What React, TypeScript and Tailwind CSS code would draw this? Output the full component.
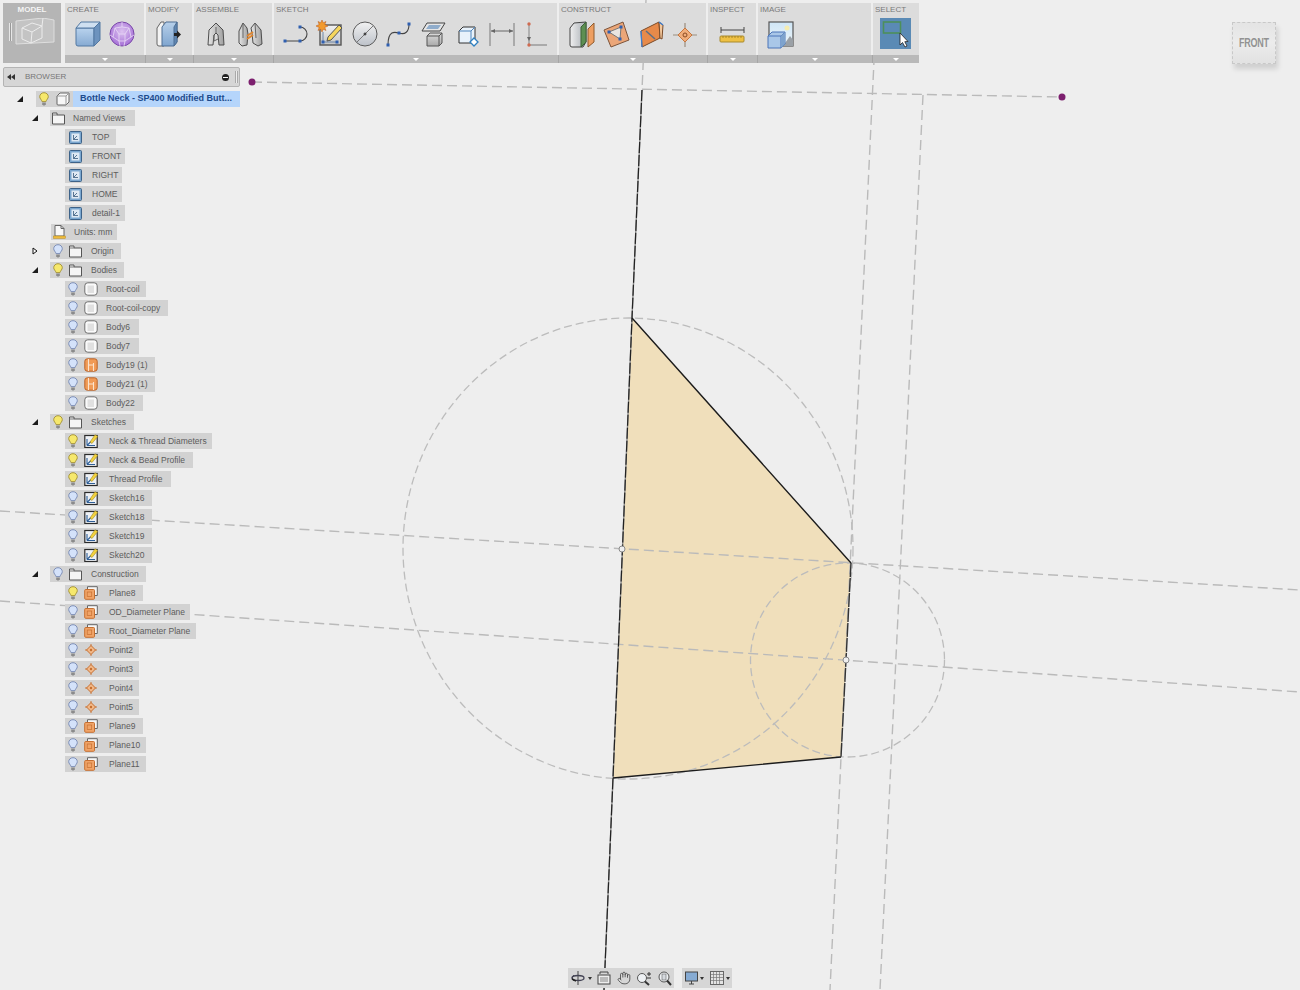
import React from "react";
import { Hand } from "lucide-react";

const S = ({ children, w = 34, h = 34 }: { children: React.ReactNode; w?: number; h?: number }) => (
  <svg width={w} height={h} viewBox={`0 0 ${w} ${h}`} className="block shrink-0">{children}</svg>
);
const Dot = ({ x, y, c = "#2f5fb0" }: { x: number; y: number; c?: string }) => <rect x={x - 1.5} y={y - 1.5} width={3} height={3} fill={c} />;

const Grad = ({ id, a, b, h }: { id: string; a: string; b: string; h?: boolean }) => (
  <defs><linearGradient id={id} x1="0" y1="0" x2={h ? "1" : "0"} y2={h ? "0" : "1"}><stop offset="0" stopColor={a} /><stop offset="1" stopColor={b} /></linearGradient></defs>
);

const IBox = () => (
  <S><Grad id="bx" a="#b9d3ee" b="#86aad2" />
    <path d="M5 10 L23 10 L23 28 L7 28 Q5 28 5 26 Z" fill="url(#bx)" stroke="#5278a2" />
    <path d="M5 10 L10 4 L29 4 L23 10 Z" fill="#cfe0f1" stroke="#5278a2" />
    <path d="M23 10 L29 4 L29 22 L23 28 Z" fill="#6d93be" stroke="#5278a2" />
  </S>
);
const ISphere = () => (
  <S><defs><radialGradient id="sp" cx="0.5" cy="0.4" r="0.6"><stop offset="0" stopColor="#dcc2f0" /><stop offset="1" stopColor="#a56fd6" /></radialGradient></defs>
    <circle cx="17" cy="16" r="12" fill="url(#sp)" stroke="#7a4aa8" />
    <path d="M17 4 L17 9 M10 10 L17 9 L24 10 M10 10 L8 19 L14 23 L20 23 L26 19 L24 10 M14 23 L15 28 M20 23 L19 28 M8 19 L5 17 M26 19 L29 17 M10 10 L14 16 L20 16 L24 10 M14 16 L14 23 M20 16 L20 23" fill="none" stroke="#eadcf6" strokeWidth="0.8" />
  </S>
);
const IPress = () => (
  <S><Grad id="pr" a="#b7d0ea" b="#7fa5cf" />
    <path d="M7 10 L11 4 L14 4 L14 28 L9 28 Q7 28 7 26 Z" fill="#f3f3f3" stroke="#666" />
    <path d="M12 9 L16 4 L27 4 L27 24 L24 28 L12 28 Z" fill="url(#pr)" stroke="#4f6f94" />
    <path d="M24 9 L27 4 L27 24 L24 28 Z" fill="#5f86b2" stroke="#4f6f94" />
    <path d="M24 15 L27 15 L27 12.5 L31 16.5 L27 20.5 L27 18 L24 18 Z" fill="#222" />
  </S>
);
const IJoint = () => (
  <S><Grad id="jt" a="#e4e4e4" b="#a0a0a0" h />
    <path d="M17 5 L24 12 L25 27 L20 27 L19 17 L17 15 L15 17 L14 27 L9 27 L10 12 Z" fill="url(#jt)" stroke="#4d4d4d" />
    <path d="M17 9 L17 15 M15 17 L15 23 L19 21" fill="none" stroke="#666" />
  </S>
);
const IJoint2 = () => (
  <S><Grad id="jt2" a="#e6e6e6" b="#a2a2a2" h />
    <path d="M10 5 L14 10 L15 16 L14 27 L9 28 L6 25 L6 13 Z" fill="url(#jt2)" stroke="#4d4d4d" />
    <path d="M22 5 L28 12 L29 26 L25 28 L20 25 L19 15 L18 10 Z" fill="url(#jt2)" stroke="#4d4d4d" />
    <path d="M10 5 L10 20 M22 5 L23 20" stroke="#666" fill="none" />
    <path d="M14 18 L20 14 M14 21 L20 17" stroke="#e0862f" strokeWidth="2" fill="none" />
  </S>
);
const ILine = () => (
  <S><path d="M6 23 L21 23 A7 7 0 0 0 21 9" fill="none" stroke="#444" strokeWidth="1.1" /><Dot x={6} y={23} /><Dot x={21} y={23} /><Dot x={21} y={9} /></S>
);
const ISketch = () => (
  <S><Grad id="sk" a="#f2f2f2" b="#c4c4c4" />
    <rect x="7" y="7" width="21" height="20" fill="url(#sk)" stroke="#555" strokeWidth="1.4" />
    <path d="M10 24 L24 24 M10 24 L10 14" stroke="#6c86a8" fill="none" />
    <Dot x={10} y={24} /><Dot x={24} y={24} />
    <path d="M15 19 L26 7 L29 10 L18 22 L14 23 Z" fill="#f6d65c" stroke="#555" />
    <path d="M9 2 L10.3 4.8 L13 3.5 L11.8 6.5 L15 8 L11.8 9.5 L13 12.5 L10.3 11.2 L9 14 L7.7 11.2 L5 12.5 L6.2 9.5 L3 8 L6.2 6.5 L5 3.5 L7.7 4.8 Z" fill="#f29a2e" stroke="#b4541a" strokeWidth="0.5" />
  </S>
);
const ICircle = () => (
  <S><Grad id="ci" a="#f2f2f2" b="#bcc1c9" />
    <circle cx="17" cy="16" r="12" fill="url(#ci)" stroke="#5a5a5a" />
    <path d="M9 24 L25 8" stroke="#777" /><path d="M15.5 16 L18.5 16 M17 14.5 L17 17.5" stroke="#222" />
  </S>
);
const ISpline = () => (
  <S><path d="M6 27 C6 12 13 14 17 15 C23 17 27 14 27 6" fill="none" stroke="#444" strokeWidth="1.1" /><Dot x={6} y={27} /><Dot x={17} y={15} /><Dot x={27} y={6} /></S>
);
const IPlaneBox = () => (
  <S><Grad id="pb" a="#dcdcdc" b="#a9a9a9" />
    <path d="M11 5 L29 5 L24 13 L6 13 Z" fill="#e6e6e6" stroke="#444" />
    <path d="M13 7 L25 7 L22 11 L10 11 Z" fill="#8faccb" />
    <path d="M11 18 L14 15 L26 15 L26 25 L23 28 L11 28 Z" fill="url(#pb)" stroke="#555" />
    <path d="M11 18 L23 18 L23 28 M23 18 L26 15" stroke="#555" fill="none" />
  </S>
);
const ICubeLine = () => (
  <S><path d="M9 13 L13 9 L25 9 L25 21 L21 25 L9 25 Z" fill="#e8f2fb" stroke="#333" />
    <path d="M9 13 L21 13 L21 25 M21 13 L25 9" fill="none" stroke="#4f86bd" />
    <path d="M24 20 L28 24 L24 28 L20 24 Z" fill="#fff" stroke="#2e7fc0" strokeWidth="1.3" />
  </S>
);
const IDim = () => (
  <S><path d="M5 5 L5 28 M29 5 L29 28" stroke="#999" strokeWidth="1.5" /><path d="M6 13 L28 13" stroke="#666" /><path d="M6 13 L10 11 L10 15 Z M28 13 L24 11 L24 15 Z" fill="#666" /></S>
);
const IConstr = () => (
  <S><path d="M10 6 L10 27 L28 27" fill="none" stroke="#999" strokeWidth="1.3" /><path d="M10 23 L8 19 L12 19 Z" fill="#666" /><circle cx="10" cy="6" r="1.7" fill="#cf6a50" /><circle cx="10" cy="27" r="1.7" fill="#cf6a50" /></S>
);
const IOffset = () => (
  <S><Grad id="of" a="#f0f0f0" b="#a6acb2" h />
    <path d="M5 10 L9 5 L21 4 L21 24 L18 29 L7 29 Q5 29 5 27 Z" fill="url(#of)" stroke="#444" />
    <path d="M16 9 L21 4 L21 24 L16 29 Z" fill="#5d8f52" stroke="#3c6337" />
    <path d="M23 11 L29 5 L29 24 L23 29 Z" fill="#ee9f62" stroke="#8f5a2d" />
  </S>
);
const ITilt = () => (
  <S><path d="M5 12 L24 4 L30 22 L12 29 Z" fill="#eba678" stroke="#7d543a" />
    <path d="M10 14 L22 9 L21 21 Z" fill="#e9e5e1" stroke="#777" />
    <Dot x={10} y={14} c="#3160b0" /><Dot x={22} y={9} c="#3160b0" /><Dot x={21} y={21} c="#3160b0" />
  </S>
);
const IMid = () => (
  <S><path d="M7 13 L25 4 L26 20 L8 29 Z" fill="#e78a4a" stroke="#7a4a28" />
    <path d="M25 4 L29 7 L28 21 L26 20 Z" fill="#f2c79c" stroke="#7a4a28" />
    <path d="M7 13 L8 29 M25 4 L29 7" stroke="#3f7fd0" strokeWidth="1.3" />
    <path d="M12 13 L21 21" stroke="#5b6f86" strokeWidth="1.5" />
  </S>
);
const IPointC = () => (
  <S><path d="M17 5 L17 29 M5 17 L29 17" stroke="#9a8d7e" strokeWidth="1.2" /><path d="M17 10 L24 17 L17 24 L10 17 Z" fill="#f0ad7a" stroke="#c7763e" /><circle cx="17" cy="17" r="2" fill="none" stroke="#8a4a22" /></S>
);
const IRuler = () => (
  <S><path d="M6 12 L29 12 M6 9 L6 15 M29 9 L29 15" stroke="#444" /><rect x="5" y="18" width="24" height="6" rx="1" fill="#eec043" stroke="#a98a2c" /><path d="M8 18v2M11 18v2M14 18v2M17 18v2M20 18v2M23 18v2M26 18v2" stroke="#8f7420" strokeWidth="0.7" /></S>
);
const IImage = () => (
  <S><Grad id="im" a="#cfe6f6" b="#eef6fb" />
    <rect x="6" y="4" width="24" height="24" fill="url(#im)" stroke="#555" strokeWidth="1.2" />
    <circle cx="24" cy="10" r="2.5" fill="#f4ecb0" />
    <path d="M20 28 L27 18 L30 22 L30 28 Z" fill="#9aa0a6" />
    <path d="M5 18 L9 14 L22 14 L22 26 L18 30 L5 30 Z" fill="#a9c7e8" stroke="#4a74b8" />
    <path d="M5 18 L18 18 L18 30 M18 18 L22 14" fill="none" stroke="#4a74b8" />
    <path d="M18 18 L22 14 L22 26 L18 30 Z" fill="#7ea3cd" />
  </S>
);
const ISelect = () => (
  <S w={31} h={31}>
    <rect width="31" height="31" fill="#5a8ab5" />
    <rect x="3.5" y="4" width="17" height="11" fill="none" stroke="#4d8f5a" strokeWidth="1.6" />
    <path d="M20 15 L20 27 L22.5 24.5 L25 29 L27 28 L24.8 23.7 L28 23.5 Z" fill="#fff" stroke="#222" strokeWidth="0.8" />
  </S>
);

const Bulb = ({ on }: { on?: boolean }) => (
  <svg width="10" height="14" viewBox="0 0 10 14" className="block">
    <path d="M5 0.7 C2.4 0.7 0.7 2.6 0.7 4.7 C0.7 6.7 2.6 7.6 3 9.6 L7 9.6 C7.4 7.6 9.3 6.7 9.3 4.7 C9.3 2.6 7.6 0.7 5 0.7 Z" fill={on ? "#f6e86c" : "#d4e2fa"} stroke={on ? "#a8973f" : "#7f90b8"} />
    <path d="M3.2 10.5 L6.8 10.5 L6.8 12.2 L5.6 13.4 L4.4 13.4 L3.2 12.2 Z" fill="#8b8b8b" />
  </svg>
);
const Folder = () => (
  <svg width="13" height="13" viewBox="0 0 13 13" className="block"><path d="M0.5 1 L5 1 L5 3 L12.5 3 L12.5 12 L0.5 12 Z" fill="#f5f5f5" stroke="#555" /><path d="M0.5 3 L5 3" stroke="#777" /></svg>
);
const Cube = () => (
  <svg width="14" height="14" viewBox="0 0 14 14" className="block"><path d="M1 4 L4 1 L13 1 L13 10 L10 13 L2 13 Q1 13 1 12 Z" fill="#f7f7f7" stroke="#666" /><path d="M10 4 L13 1 M10 4 L10 13 M1 4 L10 4" stroke="#999" fill="none" /></svg>
);
const BodyI = () => (
  <svg width="14" height="14" viewBox="0 0 14 14" className="block"><rect x="0.8" y="0.8" width="12.4" height="12.4" rx="3" fill="#fafafa" stroke="#6f6f6f" /><rect x="3.5" y="3.5" width="6.5" height="7.5" fill="#e0e0e0" /></svg>
);
const BodyO = () => (
  <svg width="14" height="14" viewBox="0 0 14 14" className="block"><rect x="0.8" y="0.8" width="12.4" height="12.4" rx="2.5" fill="#f09a55" stroke="#b9632a" /><path d="M4.5 1 L4.5 13 M9.5 5 L9.5 13 M4.5 7 L9.5 7" stroke="#fbe3cd" strokeWidth="1.1" fill="none" /></svg>
);
const SketchI = () => (
  <svg width="14" height="14" viewBox="0 0 14 14" className="block"><rect x="0.8" y="1.5" width="12.4" height="12" fill="#eef1f5" stroke="#2b2b2b" strokeWidth="1.2" /><path d="M3 11.5 L11 11.5 M3 11.5 L3 5 M3 11.5 L7 7.5" stroke="#2f5f98" strokeWidth="1.1" fill="none" /><path d="M6 8 L11 0.8 L13.8 2.4 L8 9.5 Z" fill="#f3d23f" stroke="#8e7a1c" strokeWidth="0.5" /></svg>
);
const PlaneI = () => (
  <svg width="14" height="14" viewBox="0 0 14 14" className="block"><path d="M3.5 3 L3.5 0.7 L13.3 0.7 L13.3 9.5 L10.5 9.5" fill="#f7f7f7" stroke="#666" /><rect x="0.7" y="3.5" width="9.8" height="9.8" rx="1" fill="#f0a468" stroke="#c66f30" /><rect x="3.2" y="6" width="4.5" height="4.5" fill="none" stroke="#c66f30" strokeWidth="0.7" /></svg>
);
const PointI = () => (
  <svg width="14" height="14" viewBox="0 0 14 14" className="block"><path d="M7 1 L7 13 M1 7 L13 7" stroke="#c97a3e" /><path d="M7 2.5 L11.5 7 L7 11.5 L2.5 7 Z" fill="#f2b98a" stroke="#c66f30" /><circle cx="7" cy="7" r="1.2" fill="#c66f30" /></svg>
);
const ViewI = () => (
  <svg width="13" height="13" viewBox="0 0 13 13" className="block"><rect x="0.5" y="0.5" width="12" height="12" rx="1" fill="#7ba7cf" stroke="#3d6288" /><rect x="2.5" y="2.5" width="8" height="8" fill="#dfe9f3" /><path d="M4.5 4 L4.5 8.5 L9 8.5 M4.5 8.5 L8 5" stroke="#36587a" fill="none" strokeWidth="0.8" /></svg>
);
const UnitsI = () => (
  <svg width="13" height="14" viewBox="0 0 13 14" className="block"><path d="M2 0.5 L8 0.5 L11 3.5 L11 11 L2 11 Z" fill="#f8f8f8" stroke="#666" /><path d="M8 0.5 L8 3.5 L11 3.5" fill="none" stroke="#666" /><rect x="0.5" y="11" width="12" height="2.4" fill="#eebb3c" stroke="#b88a1f" strokeWidth="0.5" /></svg>
);

const Tri = ({ open = true }: { open?: boolean }) =>
  open ? (
    <svg width="8" height="8" viewBox="0 0 8 8" className="block"><path d="M1 7 L7 7 L7 1 Z" fill="#1c1c1c" /></svg>
  ) : (
    <svg width="8" height="8" viewBox="0 0 8 8" className="block"><path d="M2 1 L6 4 L2 7 Z" fill="#fff" stroke="#111" /></svg>
  );

type Row = {
  t: string;
  lvl: "w-[50px]" | "w-[51px]" | "w-[65px]";
  w: string;
  kind: "named" | "view" | "units" | "folder" | "body" | "item";
  icon: React.ReactNode;
  on?: boolean;
  arrow?: "open" | "closed";
};

const rows: Row[] = [
  { t: "Named Views", lvl: "w-[50px]", w: "w-[85px]", kind: "named", icon: <Folder />, arrow: "open" },
  { t: "TOP", lvl: "w-[65px]", w: "w-[51px]", kind: "view", icon: <ViewI /> },
  { t: "FRONT", lvl: "w-[65px]", w: "w-[60px]", kind: "view", icon: <ViewI /> },
  { t: "RIGHT", lvl: "w-[65px]", w: "w-[57px]", kind: "view", icon: <ViewI /> },
  { t: "HOME", lvl: "w-[65px]", w: "w-[57px]", kind: "view", icon: <ViewI /> },
  { t: "detail-1", lvl: "w-[65px]", w: "w-[60px]", kind: "view", icon: <ViewI /> },
  { t: "Units: mm", lvl: "w-[51px]", w: "w-[66px]", kind: "units", icon: <UnitsI /> },
  { t: "Origin", lvl: "w-[50px]", w: "w-[71px]", kind: "folder", icon: <Folder />, arrow: "closed" },
  { t: "Bodies", lvl: "w-[50px]", w: "w-[74px]", kind: "folder", icon: <Folder />, on: true, arrow: "open" },
  { t: "Root-coil", lvl: "w-[65px]", w: "w-[81px]", kind: "body", icon: <BodyI /> },
  { t: "Root-coil-copy", lvl: "w-[65px]", w: "w-[103px]", kind: "body", icon: <BodyI /> },
  { t: "Body6", lvl: "w-[65px]", w: "w-[74px]", kind: "body", icon: <BodyI /> },
  { t: "Body7", lvl: "w-[65px]", w: "w-[74px]", kind: "body", icon: <BodyI /> },
  { t: "Body19 (1)", lvl: "w-[65px]", w: "w-[90px]", kind: "body", icon: <BodyO /> },
  { t: "Body21 (1)", lvl: "w-[65px]", w: "w-[90px]", kind: "body", icon: <BodyO /> },
  { t: "Body22", lvl: "w-[65px]", w: "w-[78px]", kind: "body", icon: <BodyI /> },
  { t: "Sketches", lvl: "w-[50px]", w: "w-[84px]", kind: "folder", icon: <Folder />, on: true, arrow: "open" },
  { t: "Neck & Thread Diameters", lvl: "w-[65px]", w: "w-[147px]", kind: "item", icon: <SketchI />, on: true },
  { t: "Neck & Bead Profile", lvl: "w-[65px]", w: "w-[128px]", kind: "item", icon: <SketchI />, on: true },
  { t: "Thread Profile", lvl: "w-[65px]", w: "w-[106px]", kind: "item", icon: <SketchI />, on: true },
  { t: "Sketch16", lvl: "w-[65px]", w: "w-[87px]", kind: "item", icon: <SketchI /> },
  { t: "Sketch18", lvl: "w-[65px]", w: "w-[87px]", kind: "item", icon: <SketchI /> },
  { t: "Sketch19", lvl: "w-[65px]", w: "w-[87px]", kind: "item", icon: <SketchI /> },
  { t: "Sketch20", lvl: "w-[65px]", w: "w-[87px]", kind: "item", icon: <SketchI /> },
  { t: "Construction", lvl: "w-[50px]", w: "w-[96px]", kind: "folder", icon: <Folder />, arrow: "open" },
  { t: "Plane8", lvl: "w-[65px]", w: "w-[78px]", kind: "item", icon: <PlaneI />, on: true },
  { t: "OD_Diameter Plane", lvl: "w-[65px]", w: "w-[125px]", kind: "item", icon: <PlaneI /> },
  { t: "Root_Diameter Plane", lvl: "w-[65px]", w: "w-[131px]", kind: "item", icon: <PlaneI /> },
  { t: "Point2", lvl: "w-[65px]", w: "w-[74px]", kind: "item", icon: <PointI /> },
  { t: "Point3", lvl: "w-[65px]", w: "w-[74px]", kind: "item", icon: <PointI /> },
  { t: "Point4", lvl: "w-[65px]", w: "w-[74px]", kind: "item", icon: <PointI /> },
  { t: "Point5", lvl: "w-[65px]", w: "w-[74px]", kind: "item", icon: <PointI /> },
  { t: "Plane9", lvl: "w-[65px]", w: "w-[78px]", kind: "item", icon: <PlaneI /> },
  { t: "Plane10", lvl: "w-[65px]", w: "w-[81px]", kind: "item", icon: <PlaneI /> },
  { t: "Plane11", lvl: "w-[65px]", w: "w-[81px]", kind: "item", icon: <PlaneI /> },
];

const TreeRow = ({ r }: { r: Row }) => {
  const hasBulb = r.kind === "folder" || r.kind === "body" || r.kind === "item";
  const iconCls = hasBulb ? "ml-[6px] w-[14px]" : r.kind === "view" ? "ml-[4px] w-[13px]" : "ml-[2px] w-[13px]";
  const textCls =
    r.kind === "item" ? "ml-[11px]" : r.kind === "body" || r.kind === "folder" ? "ml-[8px]" : r.kind === "view" ? "ml-[10px]" : "ml-[8px]";
  return (
    <div className="flex h-4 items-center">
      <div className={`${r.lvl} flex h-4 items-center justify-end pr-[11px]`}>
        {r.arrow && <Tri open={r.arrow === "open"} />}
      </div>
      <div className={`${r.w} flex h-4 items-center bg-[#d2d2d2]`}>
        {hasBulb && <div className="ml-[3px] w-[10px]"><Bulb on={r.on} /></div>}
        <div className={iconCls}>{r.icon}</div>
        <span className={`${textCls} whitespace-nowrap text-[8.5px] leading-4 text-[#5c5c5c]`}>{r.t}</span>
      </div>
    </div>
  );
};

const Panel = ({ label, w, pl, last, children }: { label: string; w: string; pl: string; last?: boolean; children: React.ReactNode }) => (
  <div className={`${w} shrink-0`}>
    <div className={`h-[52px] bg-[#dcdcdc] ${last ? "" : "border-r-2 border-[#eeeeee]"}`}>
      <div className="h-[15px] pl-[2px] text-[8px] leading-[14px] text-[#7a7a7a]">{label}</div>
      <div className={`flex ${pl}`}>{children}</div>
    </div>
    <div className={`flex h-2 items-center justify-center bg-[#b9b9b9] ${last ? "" : "border-r border-[#a6a6a6]"}`}>
      <div className="h-0 w-0 border-x-[3px] border-t-[3px] border-x-transparent border-t-white" />
    </div>
  </div>
);
const Slot = ({ c }: { c: React.ReactNode }) => <div className="w-[34.3px] shrink-0">{c}</div>;

const Drop = () => <div className="h-0 w-0 border-x-[2.5px] border-t-[3px] border-x-transparent border-t-[#333]" />;

const Canvas = () => (
  <svg width="1300" height="990" viewBox="0 0 1300 990" className="absolute left-0 top-0">
    <path d="M632 318 L851 563 L841 757 L613 778 Z" fill="#f0dfbb" />
    <g fill="none" stroke="#bababa" strokeWidth="1.4" strokeDasharray="10 5">
      <path d="M252 82 L1062 97" />
      <path d="M646 0 L642 90" />
      <path d="M875 40 L830 990" />
      <path d="M923 95 L880 990" />
      <path d="M0 511 L1300 590" />
      <path d="M0 601 L1300 692" />
    </g>
    <g fill="none" stroke="#bcbcbc" strokeWidth="1.3" strokeDasharray="8 4">
      <ellipse cx="628" cy="548.5" rx="225" ry="230.5" />
      <circle cx="847.5" cy="660" r="97" />
    </g>
    <path d="M642 90 L632 318 L613 778 L604 990" fill="none" stroke="#8f8f8f" strokeWidth="1.4" />
    <path d="M642 90 L632 318 L613 778 L604 990" fill="none" stroke="#222" strokeWidth="1.2" strokeDasharray="11 2" />
    <path d="M632 318 L851 563 M841 757 L613 778" fill="none" stroke="#1c1c1c" strokeWidth="1.4" />
    <path d="M851 563 L841 757" fill="none" stroke="#333" strokeWidth="1.4" strokeDasharray="14 1" />
    <circle cx="622" cy="549" r="3" fill="#efefef" stroke="#8a8a8a" />
    <circle cx="846" cy="660" r="3" fill="#efefef" stroke="#8a8a8a" />
    <circle cx="252" cy="82" r="3.5" fill="#7c1f6e" />
    <circle cx="1062" cy="97" r="3.5" fill="#7c1f6e" />
  </svg>
);

export default function App() {
  return (
    <div className="relative h-[990px] w-[1300px] overflow-hidden bg-[#eeeeee] font-['Liberation_Sans',Arial,sans-serif]">
      <Canvas />

      {/* view cube */}
      <div className="absolute left-[1232px] top-[22px] flex h-[42px] w-[44px] items-center justify-center border border-dashed border-[#c8c8c8] bg-gradient-to-b from-[#e4e4e4] via-[#ececec] to-[#e2e2e2] shadow-[2px_5px_5px_rgba(0,0,0,0.13)]">
        <span className="scale-x-75 text-[12px] font-bold tracking-tight text-[#929292]">FRONT</span>
      </div>

      <div className="relative flex flex-col">
        {/* toolbar */}
        <div className="ml-[3px] mt-[3px] flex h-[60px]">
          <div className="mr-[4px] flex h-[60px] w-[58px] flex-col items-center bg-[#b5b5b5]">
            <div className="h-[15px] text-[8px] font-bold leading-[14px] text-[#f4f4f4]">MODEL</div>
            <div className="flex items-center">
              <div className="mr-[3px] h-[18px] w-[3px] border-x border-[#e6e6e6] bg-[#9a9a9a]" />
              <svg width="40" height="27" viewBox="0 0 40 27" className="block">
                <path d="M1 3 L28 0 L39 2 L39 24 L1 26 Z" fill="#c4c4c4" stroke="#dedede" />
                <path d="M7 10 L17 5 L27 8 L27 20 L16 25 L7 21 Z M7 10 L17 14 L27 8 M17 14 L16 25 M28 0 L27 8" fill="none" stroke="#ececec" />
              </svg>
            </div>
          </div>
          <Panel label="CREATE" w="w-[81px]" pl="pl-[6px]"><Slot c={<IBox />} /><Slot c={<ISphere />} /></Panel>
          <Panel label="MODIFY" w="w-[48px]" pl="pl-[4px]"><Slot c={<IPress />} /></Panel>
          <Panel label="ASSEMBLE" w="w-[80px]" pl="pl-[5px]"><Slot c={<IJoint />} /><Slot c={<IJoint2 />} /></Panel>
          <Panel label="SKETCH" w="w-[285px]" pl="pl-[5px]">
            <Slot c={<ILine />} /><Slot c={<ISketch />} /><Slot c={<ICircle />} /><Slot c={<ISpline />} /><Slot c={<IPlaneBox />} /><Slot c={<ICubeLine />} /><Slot c={<IDim />} /><Slot c={<IConstr />} />
          </Panel>
          <Panel label="CONSTRUCT" w="w-[149px]" pl="pl-[6px]"><Slot c={<IOffset />} /><Slot c={<ITilt />} /><Slot c={<IMid />} /><Slot c={<IPointC />} /></Panel>
          <Panel label="INSPECT" w="w-[50px]" pl="pl-[7px]"><Slot c={<IRuler />} /></Panel>
          <Panel label="IMAGE" w="w-[115px]" pl="pl-[5px]"><Slot c={<IImage />} /></Panel>
          <Panel label="SELECT" w="w-[46px]" pl="pl-[7px]" last><ISelect /></Panel>
        </div>

        {/* browser header */}
        <div className="ml-[3px] mt-[4px] flex h-5 w-[237px] items-center rounded-[2px] border border-[#b4b4b4] bg-[#d6d6d6]">
          <span className="ml-[3px] flex w-[18px]">
            <svg width="8" height="6" viewBox="0 0 8 6" className="block"><path d="M4 0 L0 3 L4 6 Z M8 0 L4 3 L8 6 Z" fill="#333" /></svg>
          </span>
          <span className="flex-1 text-[8px] text-[#777777]">BROWSER</span>
          <span className="flex h-[7px] w-[7px] items-center justify-center rounded-full bg-[#222]"><span className="h-px w-[5px] bg-white" /></span>
          <span className="ml-[6px] mr-px h-3 w-[3px] border-x border-[#a9a9a9] bg-[#eeeeee]" />
        </div>

        {/* tree */}
        <div className="mt-[4px] flex flex-col gap-[3px]">
          <div className="flex h-4 items-center">
            <div className="flex h-4 w-9 items-center justify-end pr-3"><Tri /></div>
            <div className="flex h-4 w-[37px] items-center bg-[#d2d2d2]">
              <div className="ml-[3px] w-[10px]"><Bulb on /></div>
              <div className="ml-[7px]"><Cube /></div>
            </div>
            <div className="flex h-4 w-[167px] items-center bg-[#b5d5fb] pl-[7px] text-[9px] font-bold text-[#1d4a8c]">
              <span className="whitespace-nowrap">Bottle Neck - SP400 Modified Butt...</span>
            </div>
          </div>
          {rows.map((r) => <TreeRow key={r.t} r={r} />)}
        </div>
      </div>

      {/* navigation bar */}
      <div className="absolute left-[568px] top-[968px] flex gap-[8px]">
        <div className="flex h-5 w-[106px] items-center bg-[#d6d6d6] pl-[3px]">
          <svg width="14" height="16" viewBox="0 0 14 16" className="block"><path d="M7 1 L7 15 M3 5 L1 8 L3 11" fill="none" stroke="#444" /><ellipse cx="7" cy="8" rx="6" ry="2.5" fill="none" stroke="#445" strokeWidth="1.3" /><path d="M1 9 L5 11" stroke="#222" strokeWidth="1.6" /></svg>
          <div className="ml-[3px] mr-[5px]"><Drop /></div>
          <svg width="14" height="14" viewBox="0 0 14 14" className="block"><rect x="1" y="4" width="12" height="9" fill="#eee" stroke="#444" /><rect x="3" y="6" width="8" height="5" fill="#bbb" /><path d="M3 1 L11 1 M3 1 L3 3 M11 1 L11 3" stroke="#444" fill="none" /></svg>
          <Hand size={14} strokeWidth={1.4} className="ml-[6px] text-[#444]" />
          <svg width="16" height="15" viewBox="0 0 16 15" className="ml-[5px] block"><circle cx="6" cy="7" r="4.5" fill="#eef1f4" stroke="#555" /><path d="M9 10.5 L13 14" stroke="#333" strokeWidth="2" /><path d="M11 3 L15 3 M13 1 L13 5 M11 7 L15 7" stroke="#333" /></svg>
          <svg width="15" height="15" viewBox="0 0 15 15" className="ml-[5px] block"><circle cx="7" cy="6" r="5" fill="#eef1f4" stroke="#555" /><rect x="5" y="3" width="4" height="6" fill="#d5d9de" stroke="#666" strokeWidth="0.6" /><path d="M10 9.5 L14 14" stroke="#333" strokeWidth="2" /></svg>
        </div>
        <div className="flex h-5 w-[50px] items-center bg-[#d6d6d6] pl-[3px]">
          <svg width="13" height="14" viewBox="0 0 13 14" className="block"><rect x="0.5" y="1" width="12" height="9" fill="#86abd3" stroke="#444" /><path d="M4 13 L9 13 M6.5 10 L6.5 13" stroke="#444" /></svg>
          <div className="ml-[2px] mr-[6px]"><Drop /></div>
          <svg width="14" height="14" viewBox="0 0 14 14" className="block"><rect x="0.5" y="0.5" width="13" height="13" fill="#e3e3e3" stroke="#666" /><path d="M3.5 1v12M6.5 1v12M9.5 1v12M1 3.5h12M1 6.5h12M1 9.5h12" stroke="#777" strokeWidth="0.7" /></svg>
          <div className="ml-[2px]"><Drop /></div>
        </div>
      </div>
    </div>
  );
}
